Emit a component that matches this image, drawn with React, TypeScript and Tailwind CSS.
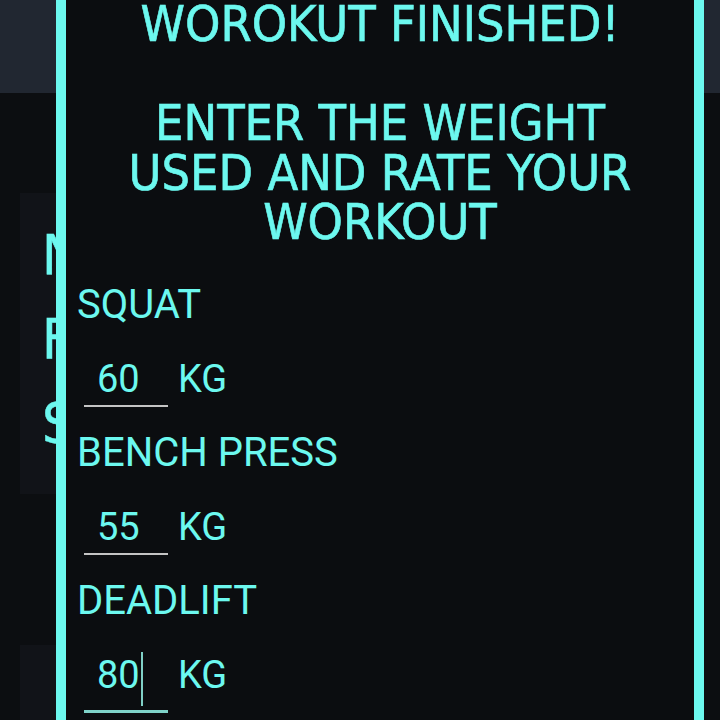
const HEAD = { fontFamily: '"DejaVu Sans Condensed", "DejaVu Sans", sans-serif' }
const BODY = { fontFamily: 'Roboto, "Liberation Sans", sans-serif' }

const lifts = [
  { name: 'SQUAT', kg: '60', focused: false },
  { name: 'BENCH PRESS', kg: '55', focused: false },
  { name: 'DEADLIFT', kg: '80', focused: true },
]

const WeightRow = ({ kg, focused }: { kg: string; focused: boolean }) => {
  return (
    <div className="flex h-[74px] items-start pt-[15px] text-[38px] leading-[44px]">
      <div
        className={
          'ml-[7px] flex w-[84px] items-start pb-[4px] pl-[13px] ' +
          (focused ? 'border-b-[3px] border-[#7fd3c9]' : 'border-b-2 border-[#c4c4c4]')
        }
      >
        <span>{kg}</span>
        {focused && <span className="mt-[-1px] ml-[1px] h-[54px] w-[2px] bg-[#80cfc6]" />}
      </div>
      <span className="ml-[10px]">KG</span>
    </div>
  )
}

const App = () => {
  return (
    <div className="relative h-[720px] w-[720px] overflow-hidden bg-[#0c0e11]">
      {/* header bar behind the dialog */}
      <div className="h-[93px] bg-[#212731]" />

      {/* plan card behind the dialog */}
      <div
        className="mx-[20px] mt-[100px] h-[301px] overflow-hidden bg-[#111318] px-[22px] pt-[20px] text-[56px] leading-[84px] whitespace-nowrap text-[#6cf8ef] [-webkit-text-stroke:0.5px_#6cf8ef]"
        style={HEAD}
      >
        <div>NEXT WORKOUT</div>
        <div>FULL BODY A</div>
        <div>SQUAT 5X5</div>
      </div>
      <div className="mx-[20px] mt-[151px] h-[200px] bg-[#111318]" />

      {/* finished dialog */}
      <div className="absolute top-0 left-[56px] h-[720px] w-[648px] border-x-[10px] border-[#6cf8ef] bg-[#0b0d10] px-[11px] text-[#6cf8ef]">
        <div
          className="text-center text-[50px] leading-[49.5px] [-webkit-text-stroke:0.6px_#6cf8ef]"
          style={HEAD}
        >
          WOROKUT FINISHED!
          <br />
          <br />
          ENTER THE WEIGHT
          <br />
          USED AND RATE YOUR
          <br />
          WORKOUT
        </div>

        <div className="mt-[20px]" style={BODY}>
          {lifts.map((l) => (
            <div key={l.name}>
              <div className="h-[74px] text-[40px] leading-[74px]">{l.name}</div>
              <WeightRow kg={l.kg} focused={l.focused} />
            </div>
          ))}
        </div>
      </div>
    </div>
  )
}

export default App
